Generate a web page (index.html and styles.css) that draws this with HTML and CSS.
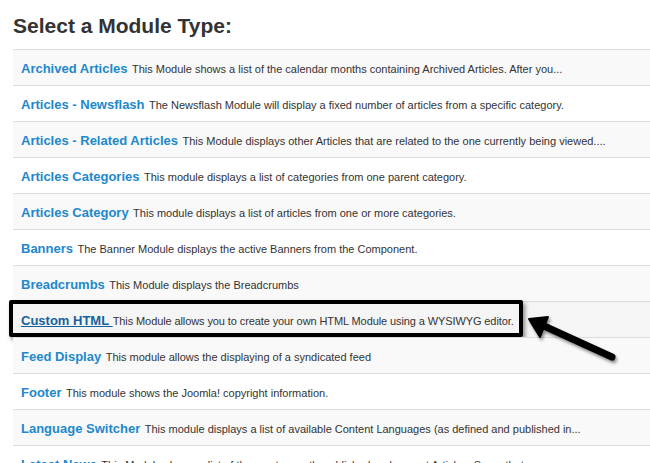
FILE: index.html
```html
<!DOCTYPE html>
<html lang="en">
<head>
    <meta charset="UTF-8">
    <title>Select a Module Type</title>
    <link rel="stylesheet" href="styles.css">
</head>
<body>
    <h2 class="title">Select a Module Type:</h2>

    <!-- Lista de módulos -->
    <ul class="modules">
        <li><a href="#">Archived Articles</a> <span>This Module shows a list of the calendar months containing Archived Articles. After you...</span></li>
        <li><a href="#">Articles - Newsflash</a> <span>The Newsflash Module will display a fixed number of articles from a specific category.</span></li>
        <li><a href="#">Articles - Related Articles</a> <span>This Module displays other Articles that are related to the one currently being viewed....</span></li>
        <li><a href="#">Articles Categories</a> <span>This module displays a list of categories from one parent category.</span></li>
        <li><a href="#">Articles Category</a> <span>This module displays a list of articles from one or more categories.</span></li>
        <li><a href="#">Banners</a> <span>The Banner Module displays the active Banners from the Component.</span></li>
        <li><a href="#">Breadcrumbs</a> <span>This Module displays the Breadcrumbs</span></li>
        <li class="hover">
            <a href="#">Custom HTML&nbsp;</a><span class="after">This Module allows you to create your own HTML Module using a WYSIWYG editor.</span>
            <div class="highlight"></div>
        </li>
        <li><a href="#">Feed Display</a> <span>This module allows the displaying of a syndicated feed</span></li>
        <li><a href="#">Footer</a> <span>This module shows the Joomla! copyright information.</span></li>
        <li><a href="#">Language Switcher</a> <span>This module displays a list of available Content Languages (as defined and published in...</span></li>
        <li><a href="#">Latest News</a> <span>This Module shows a list of the most recently published and current Articles. Some that...</span></li>
    </ul>

    <!-- Flecha que señala el módulo -->
    <svg class="arrow" width="110" height="65" viewBox="0 0 110 65">
        <defs>
            <filter id="shadow" x="-20%" y="-20%" width="150%" height="160%">
                <feDropShadow dx="1.5" dy="2.5" stdDeviation="1.6" flood-color="#000" flood-opacity="0.45"/>
            </filter>
        </defs>
        <g filter="url(#shadow)" fill="#000" stroke="#000" stroke-linejoin="round" stroke-linecap="round">
            <line x1="92" y1="52" x2="24" y2="21" stroke-width="7"/>
            <polygon points="9,14 28,12 20,32" stroke-width="2"/>
        </g>
    </svg>
</body>
</html>
```

FILE: styles.css
```css
body {
    margin: 0;
    padding: 0 0 0 13px;
    height: 463px;
    overflow: hidden;
    position: relative;
    background: #fff;
    font-family: "Liberation Sans", Arial, sans-serif;
    color: #333;
}

.title {
    margin: 14px 0 11px;
    font-size: 21px;
    line-height: 24px;
    font-weight: bold;
    color: #333;
}

/* Lista de módulos */
.modules {
    list-style: none;
    margin: 0;
    padding: 0;
    width: 680px;
}

.modules li {
    position: relative;
    height: 15px;
    border-top: 1px solid #ddd;
    padding: 10px 8px;
    line-height: 15px;
    white-space: nowrap;
}

.modules li:nth-child(odd) {
    background-color: #f9f9f9;
}

.modules li.hover {
    background-color: #f5f5f5;
}

.modules a {
    font-size: 13px;
    line-height: 15px;
    font-weight: bold;
    color: #2088cc;
    text-decoration: none;
}

.modules span {
    font-size: 11px;
    line-height: 15px;
    color: #333;
}

.modules .hover a {
    color: #15629c;
    text-decoration: underline;
}

.modules .hover .after {
    letter-spacing: -0.1px;
}

/* Recuadro de resaltado */
.highlight {
    position: absolute;
    top: -2px;
    left: -4px;
    width: 506px;
    height: 29px;
    border: 4px solid #000;
    border-radius: 2px;
    box-shadow: 2px 3px 4px rgba(0, 0, 0, 0.45);
}

.arrow {
    position: absolute;
    left: 520px;
    top: 305px;
}
```
